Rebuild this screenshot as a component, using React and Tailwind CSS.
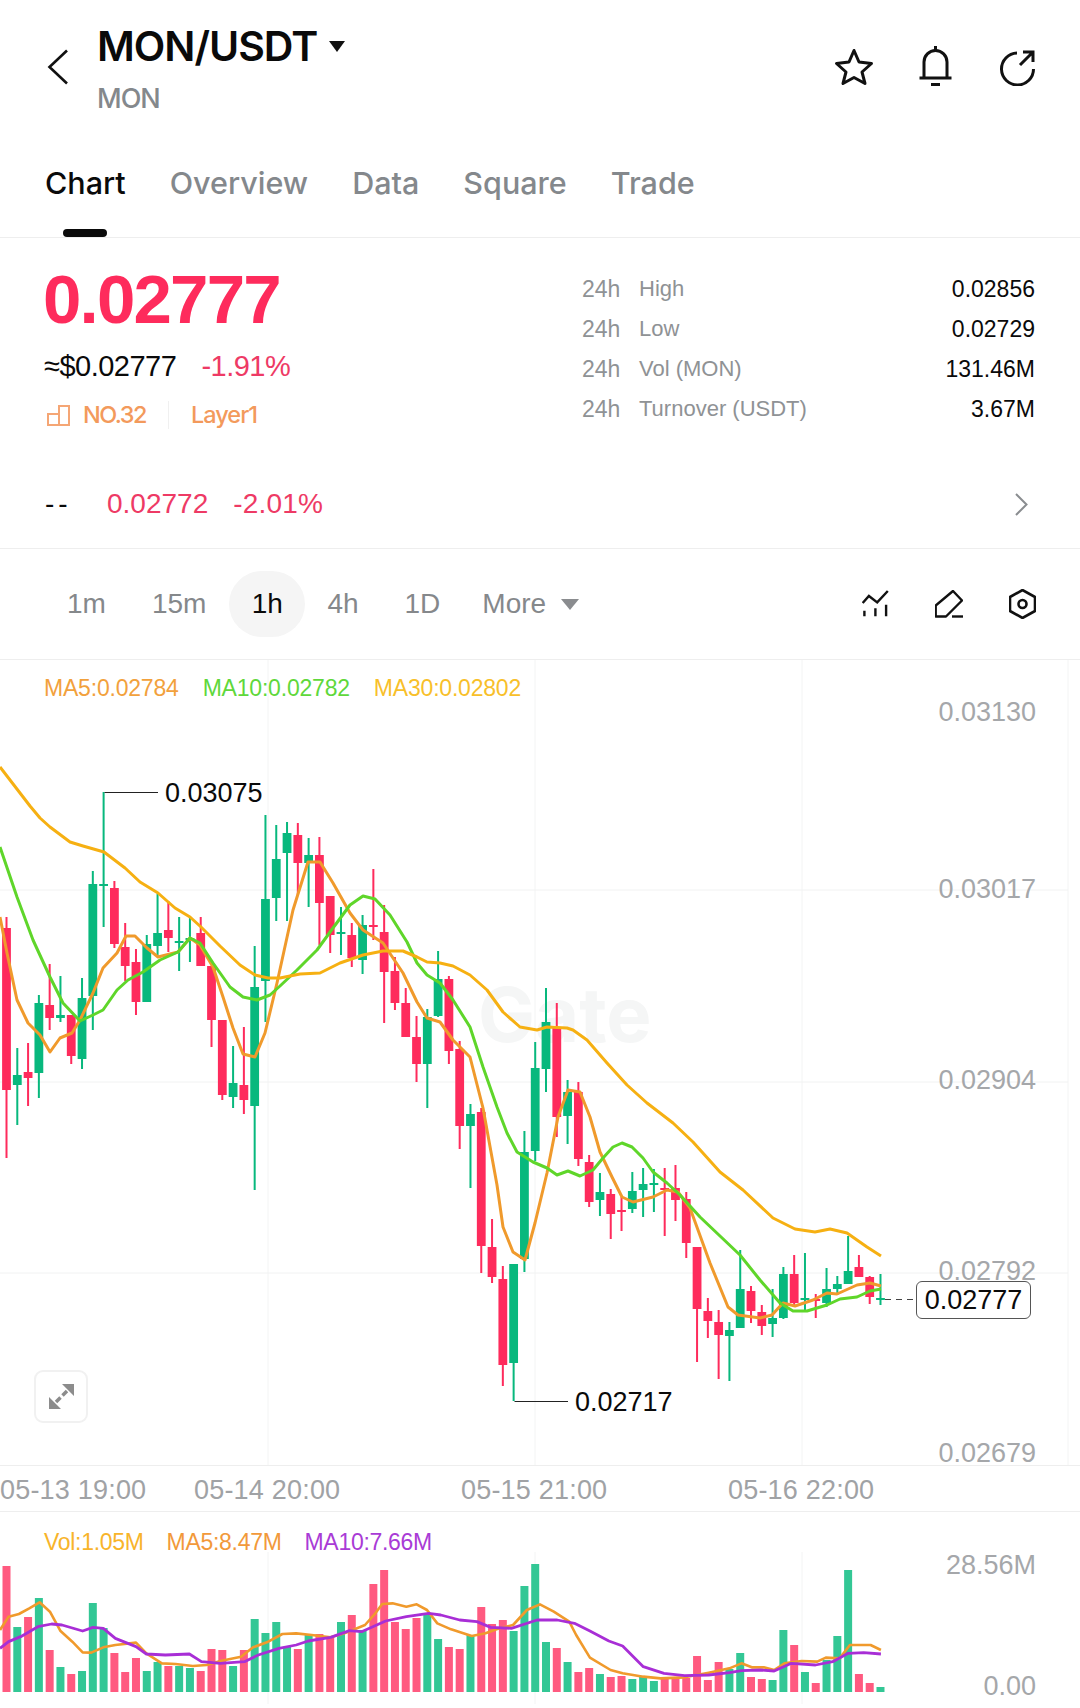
// wick top, body top, body bottom, wick bottom in page pixels
const candles = [
  ['r', 917, 928, 1090, 1158], ['g', 1048, 1075, 1085, 1125], ['r', 1043, 1072, 1078, 1106], ['g', 995, 1003, 1073, 1098],
  ['r', 964, 1005, 1018, 1030], ['g', 976, 1015, 1018, 1022], ['r', 1015, 1015, 1056, 1064], ['g', 978, 998, 1059, 1069],
  ['g', 871, 884, 996, 1030], ['g', 792, 884, 886, 927], ['r', 881, 888, 944, 948], ['r', 923, 947, 966, 981],
  ['r', 949, 962, 1002, 1015], ['g', 935, 944, 1002, 1002], ['g', 894, 933, 946, 957], ['r', 901, 930, 938, 952],
  ['g', 917, 941, 943, 971], ['g', 917, 938, 940, 962], ['r', 917, 933, 966, 966], ['r', 966, 966, 1020, 1047],
  ['r', 1020, 1020, 1095, 1100], ['g', 1046, 1083, 1097, 1108], ['r', 1027, 1085, 1100, 1114], ['g', 946, 987, 1106, 1190],
  ['g', 815, 899, 981, 1022], ['g', 825, 859, 898, 921], ['g', 822, 833, 853, 921], ['r', 823, 835, 863, 895],
  ['g', 838, 855, 863, 907], ['r', 837, 855, 903, 945], ['r', 896, 896, 935, 953], ['g', 907, 932, 934, 955],
  ['r', 923, 935, 958, 967], ['g', 915, 925, 960, 974], ['r', 869, 925, 927, 940], ['r', 905, 932, 972, 1023],
  ['r', 957, 971, 1003, 1010], ['r', 988, 1003, 1037, 1037], ['r', 1016, 1037, 1064, 1082], ['g', 1009, 1017, 1064, 1108],
  ['g', 951, 979, 1016, 1017], ['r', 976, 979, 1051, 1064], ['r', 1041, 1049, 1126, 1149], ['g', 1104, 1114, 1126, 1188],
  ['r', 1108, 1112, 1246, 1273], ['r', 1219, 1247, 1277, 1283], ['r', 1266, 1279, 1365, 1386], ['g', 1264, 1264, 1363, 1401],
  ['g', 1131, 1152, 1259, 1272], ['g', 1042, 1068, 1151, 1161], ['g', 988, 1022, 1069, 1092], ['r', 1003, 1028, 1117, 1137],
  ['g', 1080, 1092, 1116, 1144], ['r', 1082, 1092, 1159, 1166], ['r', 1155, 1162, 1202, 1207], ['g', 1173, 1192, 1200, 1216],
  ['r', 1189, 1194, 1214, 1239], ['r', 1197, 1210, 1212, 1231], ['g', 1172, 1191, 1209, 1213], ['g', 1168, 1184, 1190, 1217],
  ['g', 1169, 1183, 1185, 1212], ['r', 1168, 1188, 1190, 1236], ['r', 1165, 1188, 1200, 1221], ['r', 1192, 1199, 1243, 1258],
  ['r', 1247, 1247, 1309, 1362], ['r', 1298, 1311, 1321, 1338], ['r', 1310, 1322, 1335, 1379], ['g', 1322, 1330, 1336, 1381],
  ['g', 1250, 1289, 1328, 1328], ['r', 1286, 1291, 1311, 1323], ['r', 1305, 1312, 1326, 1335], ['g', 1289, 1318, 1324, 1337],
  ['g', 1267, 1274, 1318, 1319], ['r', 1255, 1274, 1303, 1306], ['g', 1253, 1298, 1300, 1312], ['r', 1294, 1299, 1301, 1318],
  ['g', 1268, 1289, 1303, 1307], ['g', 1276, 1284, 1289, 1295], ['g', 1236, 1271, 1284, 1284], ['r', 1255, 1267, 1277, 1277],
  ['r', 1276, 1277, 1297, 1304], ['g', 1274, 1298, 1300, 1305],
];

const ma30 = [[0, 767], [30, 806], [40, 818], [50, 827], [70, 842], [83, 846], [104, 852], [125, 868], [140, 882], [158, 893], [175, 908], [190, 917], [201, 927], [220, 946], [240, 965], [255, 975], [268, 978], [280, 978], [300, 974], [320, 973], [340, 963], [363, 955], [383, 951], [403, 951], [417, 957], [427, 962], [440, 963], [453, 966], [470, 975], [487, 990], [503, 1012], [520, 1027], [537, 1030], [547, 1027], [567, 1028], [573, 1030], [587, 1040], [607, 1063], [627, 1085], [647, 1103], [673, 1123], [693, 1142], [720, 1172], [743, 1190], [773, 1218], [795, 1229], [815, 1232], [830, 1229], [847, 1233], [867, 1247], [881, 1256]];
const ma10 = [[0, 847], [17, 897], [33, 940], [50, 977], [63, 1003], [80, 1021], [93, 1015], [103, 1010], [117, 990], [128, 980], [143, 972], [160, 960], [178, 952], [190, 938], [200, 943], [213, 963], [230, 987], [243, 997], [257, 1000], [270, 995], [280, 986], [297, 970], [317, 950], [333, 928], [350, 905], [363, 896], [375, 899], [390, 915], [407, 942], [417, 963], [427, 975], [440, 983], [453, 1000], [470, 1027], [483, 1067], [497, 1107], [507, 1133], [517, 1152], [533, 1162], [547, 1168], [557, 1175], [568, 1171], [580, 1176], [593, 1170], [603, 1158], [613, 1147], [622, 1143], [632, 1147], [643, 1158], [653, 1172], [667, 1183], [680, 1195], [700, 1217], [740, 1255], [760, 1280], [780, 1303], [793, 1311], [807, 1311], [827, 1305], [840, 1299], [857, 1297], [870, 1291], [881, 1289]];
const ma5 = [[0, 917], [7, 953], [17, 1000], [28, 1023], [40, 1035], [50, 1052], [60, 1038], [72, 1033], [80, 1020], [93, 993], [103, 968], [117, 953], [126, 936], [135, 936], [147, 948], [158, 957], [178, 952], [190, 938], [200, 945], [213, 967], [223, 997], [233, 1028], [243, 1054], [255, 1057], [265, 1033], [277, 983], [293, 910], [308, 862], [320, 862], [333, 883], [350, 913], [363, 930], [383, 943], [403, 973], [417, 1002], [427, 1018], [440, 1022], [453, 1040], [470, 1057], [483, 1108], [497, 1185], [503, 1227], [513, 1252], [525, 1260], [535, 1223], [547, 1173], [558, 1117], [568, 1090], [580, 1092], [590, 1117], [600, 1152], [612, 1177], [622, 1197], [633, 1202], [653, 1197], [667, 1190], [678, 1192], [690, 1208], [710, 1263], [728, 1307], [738, 1315], [760, 1318], [772, 1315], [783, 1303], [795, 1306], [813, 1300], [827, 1293], [837, 1294], [857, 1285], [870, 1283], [881, 1286]];

// bar heights above the volume baseline
const volumes = [
  ['r', 126], ['g', 65], ['r', 75], ['g', 94], ['r', 42], ['g', 25], ['r', 18], ['g', 21], ['g', 89], ['g', 64], ['r', 39], ['r', 20], ['r', 34], ['g', 21],
  ['g', 30], ['r', 26], ['g', 26], ['g', 24], ['r', 21], ['r', 43], ['r', 42], ['g', 26], ['r', 42], ['g', 73], ['g', 59], ['g', 70], ['g', 45], ['r', 43],
  ['g', 58], ['r', 58], ['r', 55], ['g', 70], ['r', 77], ['g', 62], ['r', 108], ['r', 122], ['r', 70], ['r', 63], ['r', 74], ['g', 78], ['g', 53], ['r', 45],
  ['r', 43], ['g', 57], ['r', 85], ['r', 68], ['r', 72], ['g', 61], ['g', 106], ['g', 128], ['g', 50], ['r', 44], ['g', 30], ['r', 20], ['r', 24], ['g', 18],
  ['r', 15], ['r', 16], ['g', 13], ['g', 15], ['g', 11], ['r', 15], ['r', 15], ['r', 14], ['r', 36], ['r', 12], ['r', 30], ['g', 23], ['g', 39], ['r', 15],
  ['r', 13], ['g', 12], ['g', 62], ['r', 47], ['g', 20], ['r', 9], ['g', 32], ['g', 56], ['g', 122], ['r', 18], ['r', 9], ['g', 5],
];

const fromLeftCrop = (pts) => pts.map(([x, y]) => [x / 2.904, 1360 + y / 3]);
const fromRightCrop = (pts) => pts.map(([x, y]) => [540 + x / 2.904, 1360 + y / 3]);

const volMa5 = [
  ...fromLeftCrop([[0, 810], [25, 770], [55, 762], [85, 745], [115, 727], [145, 755], [175, 812], [210, 845], [240, 877], [265, 878], [300, 862], [335, 855], [395, 848], [425, 880], [470, 910], [510, 912], [560, 918], [600, 915], [640, 903], [700, 890], [735, 862], [775, 847], [820, 822], [860, 820], [905, 825], [960, 832], [1000, 820], [1060, 795], [1090, 760], [1110, 732], [1140, 730], [1180, 740], [1210, 733], [1240, 750], [1270, 790], [1310, 808], [1370, 828], [1410, 820], [1450, 805], [1490, 795], [1530, 750], [1568, 733]]),
  ...fromRightCrop([[40, 755], [85, 785], [105, 825], [145, 893], [205, 930], [240, 940], [300, 950], [350, 955], [420, 952], [490, 938], [550, 925], [585, 910], [615, 922], [650, 922], [680, 930], [710, 910], [760, 903], [805, 905], [830, 893], [870, 895], [900, 855], [960, 855], [990, 870]]),
];
const volMa10 = [
  ...fromLeftCrop([[0, 865], [25, 845], [60, 830], [110, 800], [150, 792], [180, 795], [240, 813], [270, 802], [300, 805], [335, 835], [395, 860], [425, 882], [480, 885], [550, 882], [585, 905], [640, 910], [710, 905], [750, 885], [810, 865], [860, 855], [895, 843], [960, 832], [1015, 812], [1050, 815], [1120, 783], [1180, 770], [1245, 760], [1280, 765], [1335, 780], [1385, 785], [1425, 802], [1485, 805], [1560, 780]]),
  ...fromRightCrop([[50, 780], [100, 790], [145, 813], [200, 843], [240, 858], [300, 920], [360, 940], [420, 947], [490, 945], [550, 938], [585, 932], [640, 930], [680, 933], [730, 910], [800, 915], [850, 905], [895, 880], [940, 878], [990, 882]]),
];

const toPoints = (pts) => pts.map(([x, y]) => `${x},${y}`).join(' ');
const candleX = (i) => 6.5 + i * 10.79;

const tabs = ['Overview', 'Data', 'Square', 'Trade'];
const stats = [
  ['High', '0.02856'],
  ['Low', '0.02729'],
  ['Vol (MON)', '131.46M'],
  ['Turnover (USDT)', '3.67M'],
];

function PriceChart() {
  return (
    <svg className="absolute inset-0" width="1080" height="805" viewBox="0 660 1080 805" fill="none">
      {[268, 535, 802, 1068].map((x) => (
        <line key={x} x1={x} x2={x} y1="660" y2="1465" stroke="#f3f4f4" strokeWidth="1" />
      ))}
      {[890, 1082, 1273].map((y) => (
        <line key={y} x1="0" x2="1068" y1={y} y2={y} stroke="#f1f2f2" strokeWidth="1" />
      ))}
      {candles.map(([c, wt, bt, bb, wb], i) => {
        const x = candleX(i);
        const color = c === 'r' ? '#fe2b5c' : '#08b87d';
        return (
          <g key={i}>
            <rect x={x - 1} y={wt} width="2" height={wb - wt} fill={color} />
            <rect x={x - 4.4} y={bt} width="8.8" height={bb - bt} fill={color} />
          </g>
        );
      })}
      <polyline points={toPoints(ma5)} stroke="#f09a2c" strokeWidth="3" strokeLinejoin="round" />
      <polyline points={toPoints(ma10)} stroke="#5fd62a" strokeWidth="3" strokeLinejoin="round" />
      <polyline points={toPoints(ma30)} stroke="#f6b012" strokeWidth="3" strokeLinejoin="round" />
      <path d="M104.5 792.5H158" stroke="#222" strokeWidth="1" />
      <path d="M514.5 1401.5H568" stroke="#222" strokeWidth="1" />
      <path d="M885 1299.5H917" stroke="#444" strokeWidth="1" strokeDasharray="6 5" />
    </svg>
  );
}

function VolumeChart() {
  return (
    <svg className="absolute inset-0" width="1080" height="196" viewBox="0 1512 1080 196" fill="none">
      {[268, 535, 802].map((x) => (
        <line key={x} x1={x} x2={x} y1="1552" y2="1704" stroke="#f3f4f4" strokeWidth="1" />
      ))}
      {volumes.map(([c, h], i) => (
        <rect key={i} x={candleX(i) - 4} y={1692 - h} width="8" height={h} fill={c === 'r' ? '#ff5a80' : '#33c795'} />
      ))}
      <polyline points={toPoints(volMa5)} stroke="#f09a2c" strokeWidth="2.6" strokeLinejoin="round" />
      <polyline points={toPoints(volMa10)} stroke="#a82ed6" strokeWidth="2.8" strokeLinejoin="round" />
    </svg>
  );
}

export default function App() {
  return (
    <div className="w-[1080px] h-[1708px] overflow-hidden bg-white font-['Liberation_Sans',sans-serif] text-[#0a0a0a]">
      {/* Top bar */}
      <div className="flex h-[125px] items-start">
        <svg className="ml-[47px] mt-[49px]" width="21" height="36" viewBox="0 0 21 36" fill="none" stroke="#111" strokeWidth="2.6">
          <path d="M20 1.5L2.5 18L20 34.5" />
        </svg>
        <div className="ml-[29px] pt-[26px] font-[Inter,sans-serif]">
          <div className="flex items-center gap-[12px]">
            <span className="text-[41px] leading-none font-semibold tracking-[-1px]">MON/USDT</span>
            <svg width="16" height="11" viewBox="0 0 16 11"><path d="M0 0H16L8 11Z" fill="#111" /></svg>
          </div>
          <div className="mt-[18px] text-[27px] leading-none font-medium tracking-[-1px] text-[#84888c]">MON</div>
        </div>
        <div className="ml-auto mr-[44px] mt-[46px] flex items-center gap-[45px]">
          <svg width="40" height="38" viewBox="0 0 40 38" fill="none" stroke="#111" strokeWidth="3" strokeLinejoin="round">
            <path d="M20 2.5L25 14L37.5 15.5L28 24L31 35.5L20 29.5L9 35.5L12 24L2.5 15.5L15 14Z" />
          </svg>
          <svg width="33" height="41" viewBox="0 0 33 41" fill="none" stroke="#111" strokeWidth="3">
            <path d="M5 32V16A11.5 11.5 0 0 1 28 16V32" />
            <path d="M0.5 32H32.5M16.5 0V4M12 38.5H21" />
          </svg>
          <svg className="ml-[3px] mt-[3px]" width="36" height="36" viewBox="0 0 36 36" fill="none" stroke="#111" strokeWidth="3">
            <path d="M17 3A16 16 0 1 0 33.5 19" />
            <path d="M20 15L32 3M23 2H33V12" />
          </svg>
        </div>
      </div>

      {/* Tabs */}
      <div className="flex h-[113px] items-start gap-[44px] border-b border-[#eeeeee] pl-[45px] pt-[36px] font-[Inter,sans-serif] text-[30.5px] leading-[44px] font-medium text-[#84888c]">
        <div className="relative h-[76px] text-[#0a0a0a]">
          Chart
          <div className="absolute bottom-0 left-[18px] h-[8px] w-[44px] rounded-full bg-[#0a0a0a]" />
        </div>
        {tabs.map((t) => (
          <div key={t}>{t}</div>
        ))}
      </div>

      {/* Price summary */}
      <div className="flex h-[208px]">
        <div className="w-[582px] pl-[43px]">
          <div className="pt-[27px] text-[69px] leading-none font-bold tracking-[-1.8px] text-[#fe2b5c]">0.02777</div>
          <div className="mt-[14px] flex items-center gap-[25px] pl-[1px] text-[29px] leading-[36px] tracking-[-0.5px]">
            <span>≈$0.02777</span>
            <span className="text-[#ee3a65]">-1.91%</span>
          </div>
          <div className="mt-[16px] flex items-center font-[Inter,sans-serif] text-[23.5px] leading-[30px] font-medium tracking-[-1.5px] text-[#f39a5c]">
            <svg className="ml-[4px]" width="23" height="21" viewBox="0 0 23 21" fill="none" stroke="#f5a675" strokeWidth="2">
              <path d="M1 20V9H12V20ZM12 9V1H22V20H12" />
            </svg>
            <span className="ml-[13px]">NO.32</span>
            <div className="ml-[22px] mr-[22px] h-[28px] w-px bg-[#f0f0f0]" />
            <span className="tracking-[-1px]">Layer1</span>
          </div>
        </div>
        <div className="flex-1 pr-[45px] pt-[31px] text-[23px] leading-[40px]">
          {stats.map(([label, value]) => (
            <div key={label} className="flex">
              <span className="w-[57px] text-[#8f9295]">24h</span>
              <span className="text-[22px] text-[#8f9295]">{label}</span>
              <span className="ml-auto">{value}</span>
            </div>
          ))}
        </div>
      </div>

      {/* 24h change row */}
      <div className="flex h-[103px] items-center border-b border-[#eeeeee] pt-[14px] pl-[45px] pr-[52px] text-[28px] text-[#ee3a65]">
        <span className="w-[62px] text-[#0a0a0a] tracking-[4px]">--</span>
        <span>0.02772</span>
        <span className="ml-[25px] tracking-[0.2px]">-2.01%</span>
        <svg className="ml-auto" width="14" height="23" viewBox="0 0 14 23" fill="none" stroke="#8a8d90" strokeWidth="2">
          <path d="M2 1L12.5 11.5L2 22" />
        </svg>
      </div>

      {/* Timeframes and tools */}
      <div className="flex h-[111px] items-center border-b border-[#eeeeee] pl-[67px] pr-[44px] text-[28px] text-[#85888b]">
        <span>1m</span>
        <span className="ml-[46px]">15m</span>
        <span className="ml-[23px] flex h-[66px] w-[76px] items-center justify-center rounded-[33px] bg-[#f5f5f5] text-[#0a0a0a]">1h</span>
        <span className="ml-[22px]">4h</span>
        <span className="ml-[46px]">1D</span>
        <span className="ml-[42px]">More</span>
        <svg className="ml-[15px]" width="18" height="11" viewBox="0 0 18 11"><path d="M0 0H18L9 11Z" fill="#8a8c8f" /></svg>
        <div className="ml-auto flex items-center gap-[46px]">
          <svg width="27" height="28" viewBox="0 0 27 28" fill="none" stroke="#111" strokeWidth="2.4">
            <path d="M0.7 13L6.9 6L15.2 12.4L25.8 1" />
            <path d="M2.4 20.7V26.2M13.4 18.3V26.2M24.1 14.8V26.2" />
          </svg>
          <svg width="28" height="28" viewBox="0 0 28 28" fill="none" stroke="#111" strokeWidth="2.4" strokeLinejoin="round">
            <path d="M0.7 26.5V15.5L18 1L27 10.5L11 26.5Z" />
            <path d="M17 26.5H28" />
          </svg>
          <svg width="27" height="30" viewBox="0 0 27 30" fill="none" stroke="#111" strokeWidth="2.6" strokeLinejoin="round">
            <path d="M13.5 1L26 8V22L13.5 29L1 22V8Z" />
            <circle cx="13.5" cy="15" r="4" />
          </svg>
        </div>
      </div>

      {/* Price pane */}
      <div className="relative h-[806px] border-b border-[#eeeeee]">
        <div className="absolute left-[478px] top-[316px] font-[Inter,sans-serif] text-[76px] leading-none font-bold text-[#f5f6f6]">Gate</div>
        <PriceChart />
        <div className="absolute left-[44px] top-[13px] flex gap-[24px] text-[23px] leading-[30px] tracking-[-0.2px]">
          <span className="text-[#f2a13c]">MA5:0.02784</span>
          <span className="text-[#5fd83b]">MA10:0.02782</span>
          <span className="text-[#f8bf2a]">MA30:0.02802</span>
        </div>
        <div className="absolute right-[44px] top-[37px] flex flex-col items-end text-[27px] leading-[30px] text-[#a5a7aa]">
          <span>0.03130</span>
          <span className="mt-[147px]">0.03017</span>
          <span className="mt-[161px]">0.02904</span>
          <span className="mt-[161px]">0.02792</span>
          <span className="mt-[152px]">0.02679</span>
        </div>
        <span className="absolute left-[165px] top-[118px] text-[27px] leading-[30px]">0.03075</span>
        <span className="absolute left-[575px] top-[727px] text-[27px] leading-[30px]">0.02717</span>
        <span className="absolute left-[916px] top-[621px] flex h-[38px] w-[115px] items-center justify-center rounded-[6px] border border-[#555] bg-white text-[27px]">0.02777</span>
        <div className="absolute left-[34px] top-[710px] flex h-[53px] w-[54px] items-center justify-center rounded-[9px] border-2 border-[#f1f1f1] bg-white">
          <svg width="25" height="25" viewBox="0 0 25 25" fill="#8c8c8c">
            <path d="M13 0H25V12ZM0 13V25H12Z" />
            <path d="M18 7L13.5 11.5M7 18L11.5 13.5" stroke="#8c8c8c" strokeWidth="3.5" />
          </svg>
        </div>
      </div>

      {/* Time axis */}
      <div className="flex h-[46px] items-center border-b border-[#eeeeee] pt-[4px] text-[27px] tracking-[0.2px] text-[#a0a2a5]">
        <span className="w-[194px]">05-13 19:00</span>
        <span className="w-[267px]">05-14 20:00</span>
        <span className="w-[267px]">05-15 21:00</span>
        <span>05-16 22:00</span>
      </div>

      {/* Volume pane */}
      <div className="relative h-[196px]">
        <VolumeChart />
        <div className="absolute left-[44px] top-[15px] flex gap-[23px] text-[23px] leading-[30px] tracking-[-0.3px]">
          <span className="text-[#f8b42a]">Vol:1.05M</span>
          <span className="text-[#f2993a]">MA5:8.47M</span>
          <span className="text-[#a93bd6]">MA10:7.66M</span>
        </div>
        <span className="absolute right-[44px] top-[38px] text-[27px] leading-[30px] text-[#a5a7aa]">28.56M</span>
        <span className="absolute right-[44px] top-[159px] text-[27px] leading-[30px] text-[#a5a7aa]">0.00</span>
      </div>
    </div>
  );
}
